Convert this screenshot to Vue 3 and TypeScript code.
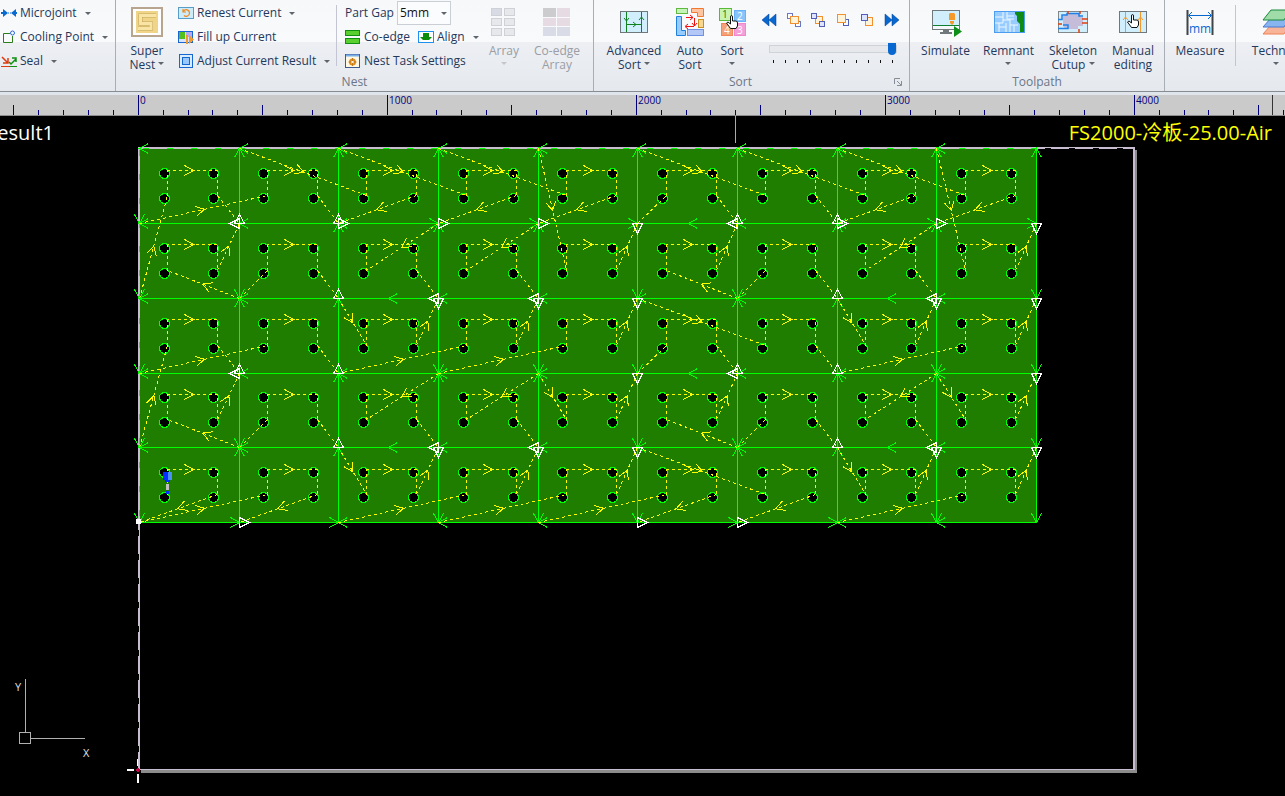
<script setup lang="ts">
import { ref } from 'vue'

type Dir = 'U' | 'D' | 'L' | 'R'
type Pt = [number, number]

const gap = ref('5mm')
const speed = ref(10)

const X = [139, 239, 338, 438, 538, 637, 737, 837, 936, 1036]
const Y = [148, 223, 298, 373, 447, 522]

const cols = [0, 1, 2, 3, 4, 5, 6, 7, 8]
const rows = [0, 1, 2, 3, 4]

const leftX = (k: number) => Math.round(139 + 99.7 * k) + 28
const topY = (r: number) => [170, 244, 319, 394, 469][r]
const holeX = (n: number) => Math.round(163.6 + 49.85 * n)
const holeY = (r: number) => [173, 248, 323, 397, 472][r]
const entryPt = (k: number, r: number): Pt => [leftX(k), holeY(r) + 22]
const exitPt = (k: number, r: number): Pt => [leftX(k) + 50, holeY(r) + 22]

// Lead-in node (column, row) of every part, row by row
const entries: (Pt | null)[][] = [
  [[0, 2], [0, 1], [1, 0], [2, 0], [3, 0], [5, 1], [5, 0], [6, 0], [7, 0]],
  [[1, 2], [1, 2], [3, 1], [4, 1], [4, 0], [6, 2], [6, 2], [8, 1], [8, 0]],
  [[0, 4], [0, 3], [2, 2], [2, 3], [3, 3], [5, 3], [5, 2], [7, 2], [7, 3]],
  [[1, 4], [1, 4], [3, 3], [4, 3], [4, 3], [6, 4], [6, 4], [8, 3], [8, 3]],
  [null, [0, 5], [2, 4], [2, 5], [3, 5], [4, 5], [5, 4], [7, 4], [7, 5]],
]
// Node reached when leaving every part
const exits: Pt[][] = [
  [[1, 1], [2, 1], [2, 1], [3, 1], [4, 1], [6, 1], [7, 1], [7, 1], [8, 1]],
  [[1, 1], [2, 2], [3, 2], [4, 2], [5, 1], [6, 1], [7, 2], [8, 2], [9, 1]],
  [[1, 3], [2, 3], [3, 2], [4, 2], [5, 2], [6, 3], [7, 3], [8, 2], [9, 2]],
  [[1, 3], [2, 4], [3, 4], [4, 4], [5, 3], [6, 3], [7, 4], [8, 4], [9, 3]],
  [[0, 5], [1, 5], [3, 4], [4, 4], [5, 4], [5, 5], [6, 5], [8, 4], [9, 4]],
]

const node = (p: Pt): Pt => [X[p[0]], Y[p[1]]]

let travel = ''
let travelHeads = ''

function addHead(a: Pt, b: Pt) {
  const dx = b[0] - a[0]
  const dy = b[1] - a[1]
  const len = Math.hypot(dx, dy)
  if (len < 45) return
  const ux = dx / len
  const uy = dy / len
  const tx = (a[0] + b[0]) / 2 + ux
  const ty = (a[1] + b[1]) / 2 + uy
  const p = (s: number) =>
    `${(tx - ux * 9 - uy * 5 * s).toFixed(1)} ${(ty - uy * 9 + ux * 5 * s).toFixed(1)}`
  travelHeads += `M${p(1)}L${tx.toFixed(1)} ${ty.toFixed(1)}L${p(-1)}`
}

for (const r of rows) {
  for (const k of cols) {
    const e = entries[r][k]
    const l = entryPt(k, r)
    const q = exitPt(k, r)
    if (e) {
      const n = node(e)
      travel += `M${n}L${l}`
      addHead(n, l)
    }
    travel += `M${l}V${topY(r)}H${q[0]}V${q[1]}`
    addHead([l[0], topY(r)], [q[0], topY(r)])
    const out = node(exits[r][k])
    travel += `M${q}L${out}`
    addHead(q, out)
  }
}

let grid = ''
for (const x of X.slice(1)) grid += `M${x} 148V522`
for (const y of Y.slice(1)) grid += `M139 ${y}H1036`

const headTable: string[] = [
  'L,UL,UL,UL,UL,UL,UL,UL,UL,U',
  'DL,L,UL,RU,RU,R,L,UL,RU,R',
  'DL,DUL,U,L,L,DL,DUL,U,L,D',
  'DL,L,UL,DUL,DUL,D,L,UL,DUL,D',
  'DL,DUL,U,L,L,DL,DUL,U,L,D',
  'D,R,RL,DL,DL,D,R,RL,DL,D',
]
const triTable: string[] = [
  ',,,,,,,,,',
  ',LU,UR,R,R,D,UL,UR,R,D',
  ',,U,LD,LD,D,,U,LD,D',
  ',LU,U,,,D,LU,U,,D',
  ',,U,LD,LD,D,,U,LD,D',
  ',R,,,,R,R,,,',
]

function headPath(x: number, y: number, d: Dir): string {
  if (d === 'U') return `M${x - 5} ${y + 9}L${x} ${y}L${x + 5} ${y + 9}`
  if (d === 'D') return `M${x - 5} ${y - 9}L${x} ${y}L${x + 5} ${y - 9}`
  if (d === 'L') return `M${x + 9} ${y - 5}L${x} ${y}L${x + 9} ${y + 5}`
  return `M${x - 9} ${y - 5}L${x} ${y}L${x - 9} ${y + 5}`
}
function triPath(x: number, y: number, d: Dir): string {
  if (d === 'U') return `M${x - 5} ${y}H${x + 5}L${x} ${y - 9}Z`
  if (d === 'D') return `M${x - 5} ${y}H${x + 5}L${x} ${y + 10}Z`
  if (d === 'L') return `M${x} ${y - 5}V${y + 5}L${x - 10} ${y}Z`
  return `M${x} ${y - 5}V${y + 5}L${x + 10} ${y}Z`
}
function fromTable(table: string[], draw: (x: number, y: number, d: Dir) => string): string {
  let out = ''
  table.forEach((line, j) =>
    line.split(',').forEach((cell, i) => {
      for (const d of cell) out += draw(X[i], Y[j], d as Dir)
    }),
  )
  return out
}
const edgeHeads = ([[688, 223], [388, 298], [887, 298], [688, 373], [388, 447], [887, 447]] as Pt[])
  .map(([x, y]) => headPath(x, y, 'L'))
  .join('')
const heads = fromTable(headTable, headPath) + edgeHeads
const triangles = fromTable(triTable, triPath)

const holes = rows.flatMap((r) =>
  Array.from({ length: 18 }, (_, n) => [
    { x: holeX(n), y: holeY(r) },
    { x: holeX(n), y: holeY(r) + 25 },
  ]).flat(),
)

const ticks = Array.from({ length: 52 }, (_, i) => {
  const n = i - 5
  return {
    x: Math.floor(138.2 + 24.9 * n),
    top: n % 10 === 0 ? 0 : Math.abs(n % 10) === 5 ? 10 : 15,
    label: n % 10 === 0 ? String(n * 100) : '',
  }
})
const labels = ticks.filter((t) => t.label && t.x < 1200)
</script>

<template>
  <div class="app">
    <header class="ribbon">
      <section class="group g-tools">
        <div class="stack">
          <button class="small">
            <svg width="16" height="16"><path d="M0 8h3M13 8h3" stroke="#0a6ad0" stroke-width="2" /><path d="M2 4l5 4-5 4zM15 4l-5 4 5 4z" fill="#0a6ad0" /><path d="M7 8h3" stroke="#0a6ad0" stroke-dasharray="1 1" /></svg>
            <span>Microjoint</span><i class="caret"></i>
          </button>
          <button class="small">
            <svg width="16" height="16" fill="none"><path d="M9 4.500H2.500v9h9V7" stroke="#2c7d1c" stroke-width="1" /><circle cx="11.500" cy="4" r="2" stroke="#2b6ae0" /></svg>
            <span>Cooling Point</span><i class="caret"></i>
          </button>
          <button class="small">
            <svg width="16" height="16" fill="none"><path d="M0 13.500h8" stroke="#e03a10" /><path d="M8 13.500h8" stroke="#109010" /><path d="M1 4l6 6M7 5v5H2" stroke="#e03a10" stroke-width="1.500" /><path d="M8 9l2 2 5-5M11 5h4v4" stroke="#109010" stroke-width="1.500" /></svg>
            <span>Seal</span><i class="caret"></i>
          </button>
        </div>
        <p class="title"></p>
      </section>

      <section class="group g-nest">
        <div class="body">
          <button class="big w62">
            <svg width="32" height="32" fill="none"><rect x="1" y="2" width="30" height="28" fill="#fff" stroke="#b9a48e" stroke-width="2" /><rect x="5" y="5" width="22" height="22" fill="#f0d488" /><path d="M25 9.500H9.500v8H20v5H7" stroke="#c0a458" stroke-width="4" /><path d="M25 9.500H9.500v8H20v5H7" stroke="#f8e4a4" stroke-width="3" /></svg>
            <span>Super<br />Nest <i class="caret"></i></span>
          </button>
          <div class="stack w158">
            <button class="small">
              <svg width="16" height="16" fill="none"><rect x=".5" y="2.500" width="15" height="11" fill="#cdebf8" stroke="#5a9cc8" /><path d="M5 4v3h3M5.500 6.500C7 3.500 11.500 4.500 11.500 8S7.500 12 6 10.500" stroke="#f08a20" stroke-width="1.200" /></svg>
              <span>Renest Current</span><i class="caret"></i>
            </button>
            <button class="small">
              <svg width="16" height="16"><rect x=".5" y="2.500" width="14" height="11" fill="#d8e4ff" stroke="#1668d0" /><path d="M1 3h6v7H1z" fill="#54c020" /><path d="M8 3h6v5H8z" fill="#b8a8f0" /><path d="M8 6h2v9H8zM11 6l5 4.500-5 4.500z" fill="#f59a28" /></svg>
              <span>Fill up Current</span>
            </button>
            <button class="small">
              <svg width="16" height="16"><rect x="1.500" y="1.500" width="13" height="13" fill="#d8ecff" stroke="#1668d0" /><rect x="4.500" y="4.500" width="7" height="7" fill="#98c8ff" stroke="#1668d0" /></svg>
              <span>Adjust Current Result</span><i class="caret"></i>
            </button>
          </div>
          <div class="rule"></div>
          <div class="stack w141">
            <div class="line">
              <label for="gap">Part Gap</label>
              <span class="combo">
                <select id="gap" v-model="gap"><option>5mm</option><option>10mm</option></select>
                <i class="caret"></i>
              </span>
            </div>
            <div class="line">
              <button class="small">
                <svg width="16" height="16"><g fill="#5ad030" stroke="#109010"><rect x=".5" y="1.500" width="14" height="5" /><rect x=".5" y="9.500" width="14" height="5" /></g></svg>
                <span>Co-edge</span>
              </button>
              <button class="small gap-l">
                <svg width="16" height="16"><rect x=".5" y="2.500" width="15" height="11" fill="#fff" stroke="#2090f0" /><path d="M5 4h6v4h3l-3 3H5L2 8h3z" fill="#0c8c0c" /></svg>
                <span>Align</span><i class="caret"></i>
              </button>
            </div>
            <button class="small">
              <svg width="16" height="16"><rect x=".5" y="1.500" width="14" height="13" fill="#fff8e4" stroke="#3c5a90" /><path d="M1 2.500h13" stroke="#7ab0e8" stroke-width="2" /><circle cx="7.500" cy="9" r="2.500" fill="none" stroke="#e08c18" stroke-width="2" /><path d="M7.500 5v8M3.500 9h8" stroke="#c07818" /><circle cx="7.500" cy="9" r="1" fill="#fff" /></svg>
              <span>Nest Task Settings</span>
            </button>
          </div>
          <button class="big off w52" disabled>
            <svg width="32" height="32"><g fill="#e6e8ec" stroke="#cfd1d6"><rect x="3.500" y="2.500" width="10" height="7" fill="#d8dae4" /><rect x="16.500" y="2.500" width="10" height="7" /><rect x="3.500" y="12.500" width="10" height="7" /><rect x="16.500" y="12.500" width="10" height="7" /><rect x="3.500" y="22.500" width="10" height="7" /><rect x="16.500" y="22.500" width="10" height="7" /></g></svg>
            <span>Array<br /><i class="caret"></i></span>
          </button>
          <button class="big off w54" disabled>
            <svg width="32" height="32"><path d="M2 2h13v9H2z" fill="#cccccf" /><path d="M16 2h13v9H16zM2 12h13v8H2zM16 12h13v8H16z" fill="#e6dbe2" /><path d="M2 21h13v9H2zM16 21h13v9H16z" fill="#d9dce6" /></svg>
            <span>Co-edge<br />Array</span>
          </button>
        </div>
        <p class="title">Nest</p>
      </section>

      <section class="group g-sort">
        <div class="body">
          <button class="big w72">
            <svg width="32" height="32" fill="none"><rect x="2.500" y="5.500" width="27" height="21" fill="#d0eefb" stroke="#70787c" /><path d="M8.500 6v20M23.500 6v20M8.500 18.500h15" stroke="#108020" /><path d="M6 12l2.500 3 2.500-3M21 14l2.500-3 2.500 3M15 16l3 2.500-3 2.500" stroke="#108020" /></svg>
            <span>Advanced<br />Sort <i class="caret"></i></span>
          </button>
          <button class="big w40">
            <svg width="32" height="32" fill="none"><rect x="2.500" y="2.500" width="11" height="5" fill="#c4f4b8" stroke="#60b840" /><path d="M17.500 2.500h12v8h-6v-4h-6z" fill="#ffc4a0" stroke="#f07830" /><path d="M2.500 10.500h5v14h4v5h-9z" fill="#98ccff" stroke="#2080e0" /><rect x="24.500" y="13.500" width="5" height="8" fill="#f8d890" stroke="#c89020" /><rect x="13.500" y="23.500" width="16" height="6" fill="#b4c8f8" stroke="#7090e0" /><path d="M12 11.500h7M16 9l3 2.500-3 2.500M20.500 12v8M18 17l2.500 3 2.500-3M20 20.500h-8M14 18l-3 2.500 3 2.500" stroke="#f01010" /></svg>
            <span>Auto<br />Sort</span>
          </button>
          <button class="big w44">
            <svg width="32" height="32"><rect x="3.500" y="2.500" width="12" height="12" fill="#c8f4b0" stroke="#58b838" /><rect x="18.500" y="4.500" width="11" height="11" fill="#88c4fc" stroke="#68b0f8" /><rect x="5.500" y="17.500" width="11" height="12" fill="#f4a078" stroke="#f08858" /><rect x="18.500" y="17.500" width="11" height="12" fill="#f4a0d8" stroke="#f088cc" /><g class="digits"><text x="6" y="12" fill="#188018">1</text><text x="21" y="14" fill="#fff">2</text><text x="8" y="28" fill="#fff">4</text><text x="21" y="28" fill="#fff">3</text></g><path d="M14.500 22.500l-4-5.500 1.500-1 2.500 2V11q0-1.500 1-1.500t1 1.500v4h3.500q1.500 0 1.500 2v3l-1.500 2.500z" fill="#fff" stroke="#111" /></svg>
            <span>Sort<br /><i class="caret"></i></span>
          </button>
          <div class="order">
            <div class="moves">
              <button aria-label="First"><svg width="16" height="16"><path d="M8 2v12L1 8zM15 2v12L8 8z" fill="#0868d0" stroke="#003c90" stroke-width=".5" /></svg></button>
              <button aria-label="Backward"><svg width="16" height="16"><g fill="#fff" stroke="#6878c8"><rect x="1.500" y="1.500" width="5" height="5" /><rect x="9.500" y="9.500" width="5" height="5" /></g><rect x="4.500" y="4.500" width="8" height="7" fill="#fff4d8" stroke="#f09030" /></svg></button>
              <button aria-label="Forward"><svg width="16" height="16"><rect x="5.500" y="4.500" width="7" height="7" fill="#fff4d8" stroke="#f09030" /><g fill="#dce4ff" stroke="#5060b8"><rect x="1.500" y="1.500" width="5" height="5" /><rect x="9.500" y="9.500" width="5" height="5" /></g></svg></button>
              <button aria-label="Send to front"><svg width="16" height="16"><rect x="8.500" y="7.500" width="5" height="6" fill="#fff" stroke="#5060b8" /><rect x="2.500" y="2.500" width="8" height="8" fill="#fff4d8" stroke="#f09030" /></svg></button>
              <button aria-label="Send to back"><svg width="16" height="16"><rect x="6.500" y="5.500" width="7" height="8" fill="#fff4d8" stroke="#f09030" /><rect x="2.500" y="2.500" width="6" height="6" fill="#dce4ff" stroke="#5060b8" /></svg></button>
              <button aria-label="Last"><svg width="16" height="16"><path d="M1 2v12l7-6zM8 2v12l7-6z" fill="#0868d0" stroke="#003c90" stroke-width=".5" /></svg></button>
            </div>
            <input v-model="speed" class="slider" type="range" min="0" max="10" aria-label="Sort position" />
            <div class="dots"><i v-for="n in 11" :key="n"></i></div>
          </div>
        </div>
        <p class="title">Sort
          <button class="launcher" aria-label="Sort options"><svg width="8" height="8" fill="none"><path d="M.5 6V.5H6M3 3l4 4M7.500 3v4.500H3" stroke="#868c96" /></svg></button>
        </p>
      </section>

      <section class="group g-path">
        <div class="body">
          <button class="big w63">
            <svg width="32" height="32"><rect x="2.500" y="4.500" width="27" height="19" fill="#d0eefb" stroke="#70787c" /><path d="M3 19.500h26" stroke="#108030" /><path d="M3 20h26v3H3z" fill="#f4f8fa" /><path d="M13 24h6v2h3v2H10v-2h3z" fill="#70787c" /><path d="M20 7h4l1 1v6h-6V8zM20 15h4v2l-2 2-2-2z" fill="#f59a28" /><path d="M24 20l8 5.500-8 5.500z" fill="#0c9018" /></svg>
            <span>Simulate</span>
          </button>
          <button class="big w63">
            <svg width="32" height="32" fill="none"><rect x="1.500" y="5.500" width="30" height="21" fill="#98ccff" stroke="#4c9cf0" /><path d="M2 11h8v6H2M10 6v5M14 6v7h7M14 10h7M6 17v9M6 21h7v5M13 17v4M17 13v13M17 19h8M21 19v7M10 14h7" stroke="#eef8ff" /><path d="M22 6h9v20h-4v-8l-3-3v-5l-2-2z" fill="#0c8c14" /></svg>
            <span>Remnant<br /><i class="caret"></i></span>
          </button>
          <button class="big w66">
            <svg width="32" height="32" fill="none"><rect x="1.500" y="5.500" width="29" height="21" fill="#d0eefb" stroke="#80888c" /><path d="M6 10l4-2h13v3h3v9h-5v3H9l-3-3z" fill="#c4bcd8" /><path d="M1 13.500h4V9h5V7.500h12V10h4M1 22.500h10V19h-5" stroke="#2080e8" stroke-width="1.500" /><path d="M11 5v3M23 5v3M25 13h6M25 17h6M1 18h4M22 27v-4" stroke="#e04010" stroke-width="1.500" /></svg>
            <span>Skeleton<br />Cutup <i class="caret"></i></span>
          </button>
          <button class="big w54">
            <svg width="32" height="32" fill="none"><rect x="2.500" y="5.500" width="27" height="21" fill="#d0eefb" stroke="#70787c" /><path d="M8.500 6v20M23.500 6v20M6 14l2.500-3 2.500 3M21 14l2.500-3 2.500 3" stroke="#f59a28" /><path d="M14.500 21.500l-4-5.500 1.500-1 2.500 2V10q0-1.500 1-1.500t1 1.500v4h3.500q1.500 0 1.500 2v3l-1.500 2.500z" fill="#fff" stroke="#111" /></svg>
            <span>Manual<br />editing</span>
          </button>
        </div>
        <p class="title">Toolpath</p>
      </section>

      <section class="group g-more">
        <div class="body">
          <button class="big w70">
            <svg width="32" height="32" fill="none"><path d="M3.500 4v25M28.500 4v25" stroke="#404448" stroke-width="2" /><path d="M5 9.500h22M8 6L4.500 9.500 8 13M24 6l3.500 3.500L24 13" stroke="#0868d0" /><text class="mm" x="16" y="27" text-anchor="middle" fill="#0868d0">mm</text></svg>
            <span>Measure</span>
          </button>
          <div class="rule"></div>
          <button class="big w80">
            <svg width="32" height="32"><path d="M11 19h19l-6 9H3z" fill="#f8b498" stroke="#f08050" /><path d="M11 12h19l-6 9H3z" fill="#88b4f0" stroke="#4878d0" /><path d="M11 4h19l-6 10H3z" fill="#a0dca8" stroke="#18883c" /></svg>
            <span>Technics<br /><i class="caret"></i></span>
          </button>
        </div>
        <p class="title"></p>
      </section>
    </header>

    <svg class="ruler" height="21">
      <g shape-rendering="crispEdges">
        <rect v-for="t in ticks" :key="t.x" :x="t.x" :y="t.top" width="1" :height="20 - t.top" fill="#00007c" />
        <rect x="1272" y="0" width="1" height="20" fill="#333" />
      </g>
      <text v-for="t in labels" :key="'l' + t.x" :x="t.x + 2" y="9" fill="#00007c">{{ t.label }}</text>
    </svg>

    <main class="canvas">
      <svg class="sheet" width="100%" height="100%">
        <g transform="translate(0 -116)">
          <path d="M735.500 116V143" stroke="#a0a0ff" />
          <g shape-rendering="crispEdges">
            <rect x="139" y="148" width="898" height="375" fill="#1f7d00" />
            <rect x="1134" y="150" width="3" height="623" fill="#8c8c8c" />
            <rect x="141" y="770" width="996" height="3" fill="#8c8c8c" />
            <rect x="138" y="147" width="997" height="2" fill="#c8bcd0" />
            <rect x="138" y="147" width="2" height="623" fill="#c8bcd0" />
            <rect x="1133" y="147" width="2" height="623" fill="#c8bcd0" />
            <rect x="138" y="769" width="997" height="1" fill="#c8bcd0" />
            <path d="M143 148.500H1036" stroke="#00ff00" stroke-dasharray="6 18" />
            <path d="M1045 148.500H1134" stroke="#000" stroke-dasharray="6 18" />
            <path d="M139.500 150V522" stroke="#00ff00" stroke-dasharray="6 18" />
            <path d="M138.500 530V769" stroke="#000" stroke-dasharray="6 18" />
          </g>
          <g transform="translate(.5 .5)" fill="none" shape-rendering="crispEdges">
            <path :d="grid" stroke="#00ff00" />
            <path :d="heads" stroke="#00ff00" />
            <circle v-for="(h, i) in holes" :key="i" :cx="h.x" :cy="h.y" r="5" fill="#000" stroke="#00ff00" />
            <path :d="travel" stroke="#ffff00" stroke-dasharray="3 3" />
            <path :d="travelHeads" stroke="#ffff00" />
            <path :d="triangles" stroke="#ffffff" />
          </g>
          <g shape-rendering="crispEdges">
            <path d="M163 472h9v8h-2v2h-5v-2h-2z" fill="#0030ff" />
            <path d="M168 472h4v8h-4z" fill="#4890f8" />
            <path d="M166 484h3v6h-3z" fill="#c0c0c0" />
            <path d="M166 491h3v3h-3z" fill="#0030ff" />
            <path d="M136 519h5v5h-5z" fill="#fff" />
            <path d="M127 769h7v2h-7zM137 759h1v7h-1zM137 774h2v9h-2z" fill="#fff" />
            <path d="M136 769h4v2h-4zM137 768h2v4h-2z" fill="#c00040" />
            <path d="M25.500 679V733M31 738.500H85M19.500 732.500h11v11h-11z" fill="none" stroke="#b0b0b0" />
          </g>
          <g class="axis" fill="#e0e0e0"><text x="15" y="691">Y</text><text x="83" y="757">X</text></g>
        </g>
      </svg>
      <span class="tag tag-l">Result1</span>
      <span class="tag tag-r">FS2000-冷板-25.00-Air</span>
    </main>
  </div>
</template>

<style>
html,
body {
  margin: 0;
  background: #000;
  overflow: hidden;
}
</style>

<style scoped>
.app {
  display: flex;
  flex-direction: column;
  height: 100vh;
  overflow: hidden;
  font: 12px/14px "Open Sans", "Noto Sans", sans-serif;
  color: #24385c;
}
button {
  border: 0;
  padding: 0;
  background: none;
  font: inherit;
  color: inherit;
}
.ribbon {
  display: flex;
  flex: none;
  height: 91px;
  background: linear-gradient(#f6f8fa 0, #f9fafb 42px, #edeff3 42px, #e5e9ee 90px);
  border-bottom: 1px solid #878c92;
  box-shadow: 0 3px 0 #dfe5eb;
}
.group {
  box-sizing: border-box;
  flex: none;
  display: flex;
  flex-direction: column;
  border-right: 1px solid #a9adb5;
  white-space: nowrap;
}
.g-tools { width: 116px; padding-left: 1px; }
.g-nest { width: 478px; }
.g-sort { width: 316px; }
.g-sort .body { padding-left: 4px; }
.g-path { width: 255px; }
.g-path .body { padding-left: 4px; }
.g-more { flex: 1 0 0; width: 0; border: 0; overflow: hidden; }
.body { display: flex; height: 73px; }
.title {
  display: flex;
  justify-content: center;
  align-items: center;
  margin: 1px 0 0;
  height: 16px;
  color: #6b7587;
}
.g-sort .title { padding: 0 7px 0 135px; justify-content: space-between; }
.launcher { display: flex; }
.stack { box-sizing: border-box; display: flex; flex-direction: column; height: 73px; padding-top: 1px; }
.small {
  display: flex;
  align-items: center;
  gap: 3px;
  height: 24px;
}
.small .caret { margin-left: 5px; }
.gap-l { margin-left: 8px; }
.line { display: flex; align-items: center; height: 24px; }
.caret {
  display: inline-block;
  width: 0;
  height: 0;
  border: 3px solid transparent;
  border-top: 3px solid #5f656d;
  border-bottom: 0;
  vertical-align: 2px;
}
.big {
  flex: none;
  display: flex;
  flex-direction: column;
  align-items: center;
  padding-top: 6px;
  gap: 6px;
}
.big svg { flex: none; }
.big .caret { margin-left: 2px; }
.big br + .caret { margin-left: 0; vertical-align: 4px; }
.off { color: #9a9da4; }
.off .caret { border-top-color: #c4c6ca; }
.w40 { width: 40px; }
.w44 { width: 44px; }
.w52 { width: 52px; }
.w54 { width: 54px; }
.w62 { width: 62px; }
.w63 { width: 63px; }
.w66 { width: 66px; }
.w70 { width: 70px; }
.w72 { width: 72px; }
.w80 { width: 80px; }
.w158 { width: 158px; }
.w141 { width: 141px; padding-left: 8px; }
.rule { flex: none; width: 1px; height: 61px; margin-top: 5px; background: #c3c6d2; }
.combo {
  display: flex;
  align-items: center;
  box-sizing: border-box;
  width: 54px;
  height: 24px;
  margin-left: 3px;
  padding-right: 3px;
  background: #fbfcfd;
  border: 1px solid #cbced4;
}
.combo select {
  flex: 1;
  width: 0;
  border: 0;
  padding: 0 0 0 2px;
  appearance: none;
  background: none;
  font: inherit;
  color: #111;
}
.digits { font: 10px "Open Sans", sans-serif; }
.mm { font: 12px "Open Sans", sans-serif; }
.order { width: 130px; margin-left: 15px; padding-top: 12px; }
.moves { display: flex; justify-content: space-between; margin: 0 -1px 0 -8px; height: 16px; }
.moves button { display: flex; }
.slider {
  display: block;
  appearance: none;
  width: 128px;
  height: 12px;
  margin: 15px 0 0;
  background: none;
}
.slider::-webkit-slider-runnable-track {
  box-sizing: border-box;
  height: 8px;
  background: #e6e8eb;
  border: 1px solid #cfd2d6;
}
.slider::-webkit-slider-thumb {
  appearance: none;
  width: 8px;
  height: 12px;
  margin-top: -3px;
  background: #0868d0;
  border-radius: 0 0 4px 4px;
}
.dots { display: flex; justify-content: space-between; width: 120px; margin: 5px 0 0 4px; }
.dots i { width: 1px; height: 3px; background: #111; }
.ruler {
  flex: none;
  display: block;
  box-sizing: border-box;
  width: 100%;
  margin-top: 3px;
  background: #cacaca;
  border-bottom: 1px solid #8c8c8c;
  overflow: visible;
  font: 10px "Open Sans", "Noto Sans", sans-serif;
}
.canvas {
  position: relative;
  flex: 1;
  min-height: 0;
  background: #000;
  overflow: hidden;
}
.sheet { display: block; }
.axis { font: 11px "Open Sans", sans-serif; }
.tag {
  position: absolute;
  top: 5px;
  font: 20px/24px "Open Sans", "Noto Sans", "Noto Sans CJK SC", sans-serif;
  white-space: nowrap;
}
.tag-l { left: -15px; color: #fff; }
.tag-r { right: 13px; color: #ff0; }
</style>
